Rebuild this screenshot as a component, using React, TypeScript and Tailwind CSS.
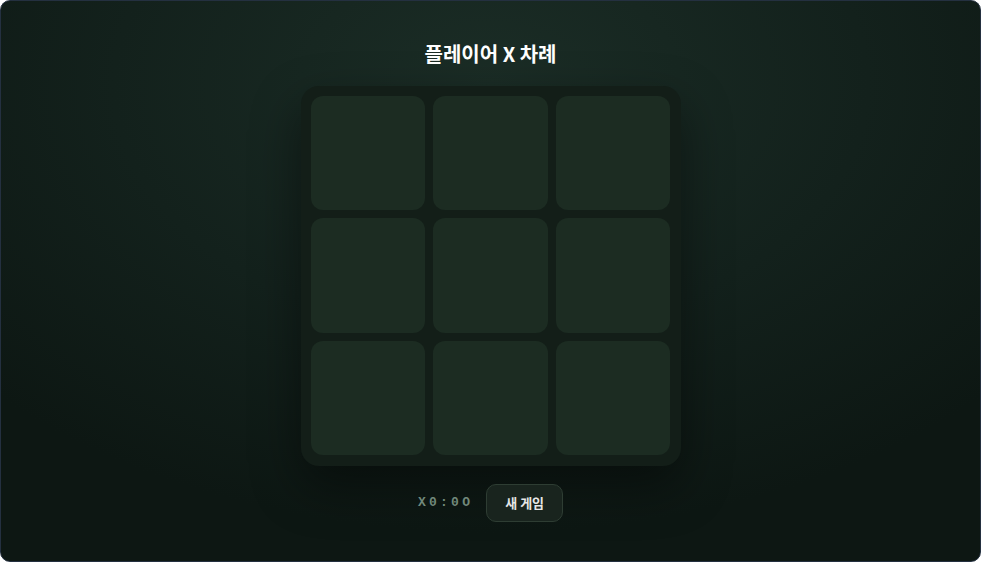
import React, { useState } from 'react';

type Cell = 'X' | 'O' | null;

export default function App() {
  const [cells, setCells] = useState<Cell[]>(Array(9).fill(null));
  const [turn, setTurn] = useState<'X' | 'O'>('X');
  const [score] = useState({ x: 0, o: 0 });

  const play = (i: number) => {
    if (cells[i]) return;
    const next = [...cells];
    next[i] = turn;
    setCells(next);
    setTurn(turn === 'X' ? 'O' : 'X');
  };

  const reset = () => {
    setCells(Array(9).fill(null));
    setTurn('X');
  };

  return (
    <div
      className="w-[981px] h-[562px] overflow-hidden rounded-[10px] border border-[#243040] bg-[radial-gradient(ellipse_70%_80%_at_50%_15%,#1b2d26_0%,#13211c_55%,#0d1713_100%)] flex flex-col items-center justify-center"
      style={{ fontFamily: '"Noto Sans CJK KR", "Noto Sans", sans-serif' }}
    >
      <h1 className="text-[20px] leading-[26px] font-bold text-white">플레이어 {turn} 차례</h1>

      <div className="mt-[19px] w-[380px] h-[380px] p-[10px] rounded-[18px] bg-[#131e18] shadow-[0_20px_50px_rgba(0,0,0,0.45)] grid grid-cols-3 grid-rows-3 gap-[8px]">
        {cells.map((c, i) => (
          <button
            key={i}
            type="button"
            onClick={() => play(i)}
            className="rounded-[12px] bg-[#1c2c22] hover:bg-[#223229] transition-colors text-5xl font-bold text-[#d8e6dd]"
          >
            {c}
          </button>
        ))}
      </div>

      <div className="mt-[18px] flex items-center gap-[13px]">
        <span
          className="text-[13px] font-bold tracking-[0.25em] text-[#71897b]"
          style={{ fontFamily: '"Liberation Mono", monospace' }}
        >
          X{score.x}:{score.o}O
        </span>
        <button
          type="button"
          onClick={reset}
          className="h-[38px] px-[18px] rounded-[10px] border border-[#2e3d33] bg-[#19241e] text-[13px] font-bold text-[#e6e6e6]"
        >
          새 게임
        </button>
      </div>
    </div>
  );
}
